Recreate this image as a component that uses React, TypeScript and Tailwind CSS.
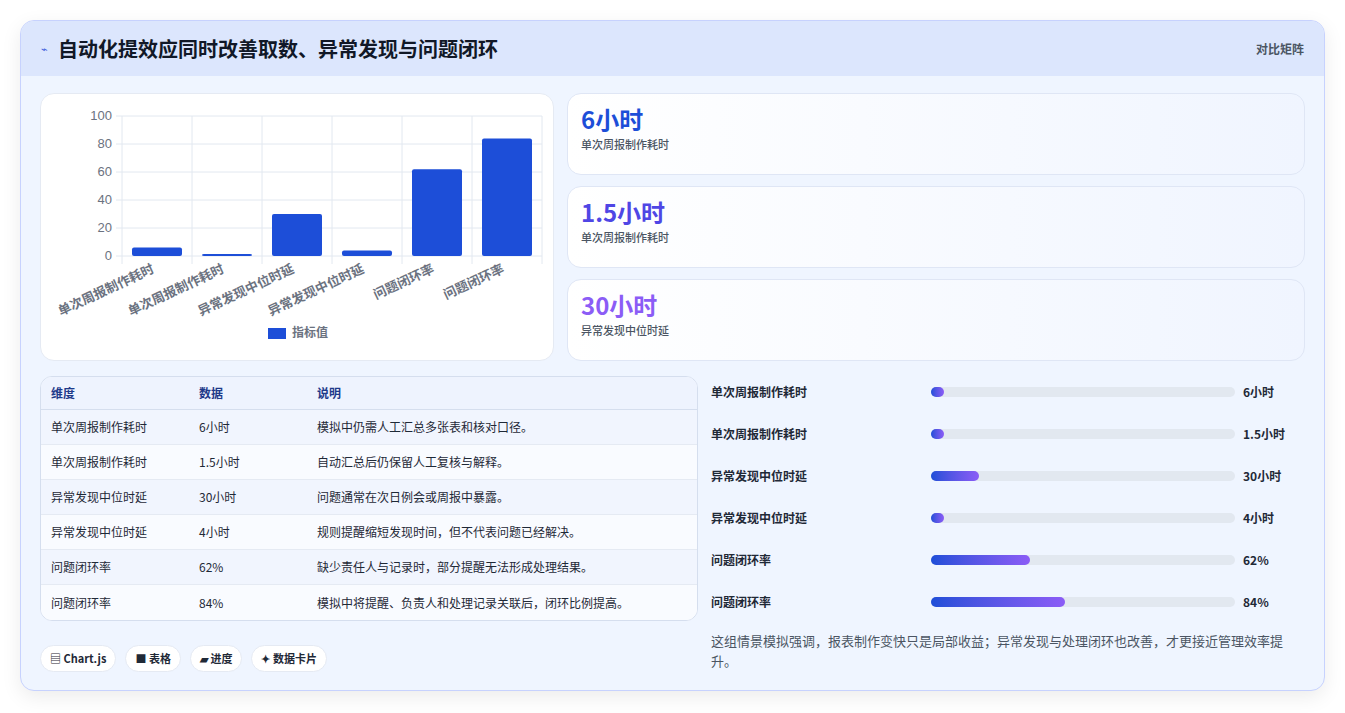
import React from "react";

const F = { fontFamily: '"Noto Sans CJK SC", "Noto Sans", sans-serif' };

const bars = [
  { l: "单次周报制作耗时", v: 6 },
  { l: "单次周报制作耗时", v: 1.5 },
  { l: "异常发现中位时延", v: 30 },
  { l: "异常发现中位时延", v: 4 },
  { l: "问题闭环率", v: 62 },
  { l: "问题闭环率", v: 84 },
];

function Chart() {
  const x0 = 81, y0 = 162, h = 140, w = 70;
  return (
    <svg width="513" height="267" viewBox="0 0 513 267">
      {[0, 20, 40, 60, 80, 100].map((t) => {
        const y = y0 - (t / 100) * h;
        return (
          <g key={t}>
            <line x1={x0 - 6} x2={x0 + 420} y1={y} y2={y} stroke="#e2e8f0" />
            <text x={x0 - 10} y={y + 4} textAnchor="end" fontSize="13" fill="#6b7280" fontFamily="Liberation Sans, sans-serif">{t}</text>
          </g>
        );
      })}
      {[0, 1, 2, 3, 4, 5, 6].map((i) => (
        <line key={i} x1={x0 + i * w} x2={x0 + i * w} y1={y0 - h} y2={y0 + 8} stroke="#e2e8f0" />
      ))}
      {bars.map((b, i) => {
        const bh = Math.max((b.v / 100) * h, 1.5);
        const cx = x0 + i * w + w / 2;
        return (
          <g key={i}>
            <rect x={cx - 25} y={y0 - bh} width={50} height={bh} rx={2} fill="#1d4ed8" />
            <text x={cx - 2} y={y0 + 16} textAnchor="end" fontSize="13" fill="#6b7280" fontWeight="700" transform={`rotate(-25 ${cx - 2} ${y0 + 16})`} style={F}>{b.l}</text>
          </g>
        );
      })}
      <rect x="227" y="234" width="18" height="11" fill="#1d4ed8" />
      <text x="251" y="243" fontSize="12" fill="#6b7280" fontWeight="600" style={F}>指标值</text>
    </svg>
  );
}

const rows = [
  ["单次周报制作耗时", "6小时", "模拟中仍需人工汇总多张表和核对口径。"],
  ["单次周报制作耗时", "1.5小时", "自动汇总后仍保留人工复核与解释。"],
  ["异常发现中位时延", "30小时", "问题通常在次日例会或周报中暴露。"],
  ["异常发现中位时延", "4小时", "规则提醒缩短发现时间，但不代表问题已经解决。"],
  ["问题闭环率", "62%", "缺少责任人与记录时，部分提醒无法形成处理结果。"],
  ["问题闭环率", "84%", "模拟中将提醒、负责人和处理记录关联后，闭环比例提高。"],
];

const prog = [
  ["单次周报制作耗时", "6小时", 13],
  ["单次周报制作耗时", "1.5小时", 13],
  ["异常发现中位时延", "30小时", 48],
  ["异常发现中位时延", "4小时", 13],
  ["问题闭环率", "62%", 99],
  ["问题闭环率", "84%", 134],
] as const;

const stats = [
  ["6小时", "单次周报制作耗时", "text-[#1d4ed8]"],
  ["1.5小时", "单次周报制作耗时", "text-[#4f46e5]"],
  ["30小时", "异常发现中位时延", "text-[#8b5cf6]"],
];

export default function App() {
  return (
    <div className="w-[1345px] h-[713px] bg-white pt-[20px] pl-[20px]" style={F}>
      <div className="w-[1305px] h-[671px] rounded-[14px] border border-[#c7d2fe] bg-[#eff5ff] overflow-hidden shadow-[0_6px_20px_rgba(0,0,0,0.08)]">
        <div className="h-[55px] bg-[#dce6fd] flex items-center justify-between px-[20px]">
          <div className="flex items-center gap-[10px]">
            <span className="text-[#3b5bdb] text-[11px]">⌁</span>
            <span className="text-[20px] font-bold text-[#111827]">自动化提效应同时改善取数、异常发现与问题闭环</span>
          </div>
          <span className="text-[12px] text-[#4b5563] font-semibold">对比矩阵</span>
        </div>
        <div className="px-[19px] pt-[17px]">
          <div className="flex gap-[13px]">
            <div className="w-[514px] h-[268px] bg-white rounded-[14px] border border-[#e5eaf3]">
              <Chart />
            </div>
            <div className="flex-1 flex flex-col gap-[11px]">
              {stats.map(([v, l, c], i) => (
                <div key={i} className="h-[82px] rounded-[14px] border border-[#dfe6f5] bg-gradient-to-r from-white to-[#f0f5ff] px-[13px] pt-[9px]">
                  <div className={`text-[24px] font-bold leading-[32px] ${c}`}>{v}</div>
                  <div className="text-[11px] text-[#4b5563] font-medium mt-[1px]">{l}</div>
                </div>
              ))}
            </div>
          </div>
          <div className="flex gap-[13px] mt-[15px]">
            <div className="w-[658px]">
              <div className="rounded-[12px] border border-[#d5deee] overflow-hidden bg-white">
                <div className="h-[33px] bg-[#eef3fe] flex items-center text-[12px] font-bold text-[#1e3a8a] border-b border-[#d5deee]">
                  <div className="w-[158px] pl-[10px]">维度</div>
                  <div className="w-[118px]">数据</div>
                  <div>说明</div>
                </div>
                {rows.map((r, i) => (
                  <div key={i} className={`h-[35px] flex items-center text-[12px] text-[#1f2937] ${i < 5 ? "border-b border-[#e5eaf3]" : ""} ${i % 2 === 0 ? "bg-[#f1f5fe]" : "bg-[#f9fbff]"}`}>
                    <div className="w-[158px] pl-[10px]">{r[0]}</div>
                    <div className="w-[118px]">{r[1]}</div>
                    <div>{r[2]}</div>
                  </div>
                ))}
              </div>
              <div className="flex gap-[9px] mt-[24px]">
                {["▤ Chart.js", "■ 表格", "▰ 进度", "✦ 数据卡片"].map((p) => (
                  <span key={p} className="h-[27px] px-[9px] rounded-full bg-white border border-[#e5eaf3] flex items-center text-[11px] font-semibold text-[#1f2937]">{p}</span>
                ))}
              </div>
            </div>
            <div className="flex-1 -mt-[5px]">
              {prog.map(([l, v, w], i) => (
                <div key={i} className="h-[42px] flex items-center text-[12px] font-semibold text-[#1f2937]">
                  <div className="w-[220px]">{l}</div>
                  <div className="w-[304px] h-[10px] rounded-full bg-[#e2e8f0]">
                    <div className="h-[10px] rounded-full bg-gradient-to-r from-[#1d4ed8] to-[#8b5cf6]" style={{ width: w }} />
                  </div>
                  <div className="ml-[8px] font-bold">{v}</div>
                </div>
              ))}
              <p className="mt-[8px] text-[13px] leading-[20px] text-[#4b5563] w-[580px]">这组情景模拟强调，报表制作变快只是局部收益；异常发现与处理闭环也改善，才更接近管理效率提升。</p>
            </div>
          </div>
        </div>
      </div>
    </div>
  );
}
